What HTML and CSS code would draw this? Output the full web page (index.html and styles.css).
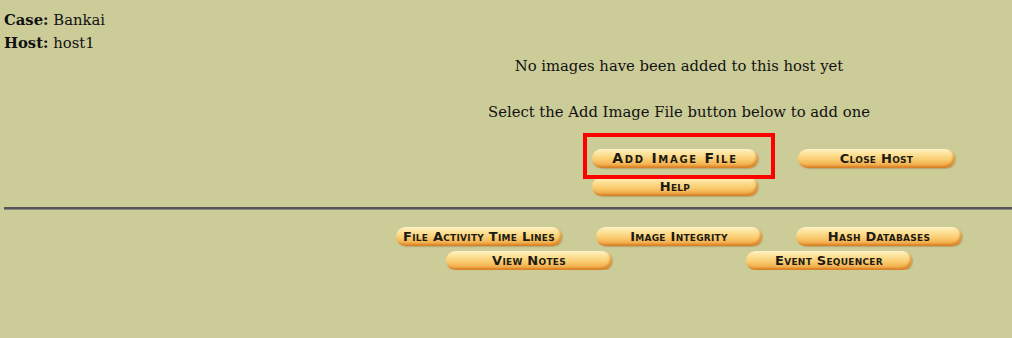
FILE: index.html
```html
<!DOCTYPE html>
<html>
<head>
<meta charset="utf-8">
<title>Host</title>
<link rel="stylesheet" href="styles.css">
</head>
<body>
<div class="page">
  <div class="info">
    <div><b>Case:</b> Bankai</div>
    <div><b>Host:</b> host1</div>
    <div class="center">No images have been added to this host yet</div>
    <div class="blank">&nbsp;</div>
    <div class="center">Select the Add Image File button below to add one</div>
  </div>

  <div class="actions">
    <div class="highlight"><a class="btn spaced">Add Image File</a></div>
    <a class="btn close">Close Host</a>
    <a class="btn">Help</a>
  </div>

  <hr class="rule">

  <div class="menu three">
    <a class="btn">File Activity Time Lines</a>
    <a class="btn">Image Integrity</a>
    <a class="btn">Hash Databases</a>
  </div>
  <div class="menu two">
    <a class="btn">View Notes</a>
    <a class="btn">Event Sequencer</a>
  </div>
</div>
</body>
</html>
```

FILE: styles.css
```css
html, body {
  margin: 0;
  padding: 0;
  background: #cccc99;
  overflow: hidden;
}

body {
  font-family: "DejaVu Serif", serif;
  font-size: 14.8px;
  color: #111;
}

.page {
  width: 1350px;
  margin-left: 4px;
  padding-top: 8px;
}

.info {
  line-height: 23px;
}

.center {
  text-align: center;
}

.actions {
  margin-top: 26px;
  margin-left: 588px;
  display: grid;
  grid-template-columns: 166px 157px;
  grid-auto-rows: 19px;
  column-gap: 40px;
  row-gap: 9px;
}

.highlight {
  position: relative;
}

.highlight::after {
  content: "";
  position: absolute;
  left: -9px;
  right: -17px;
  top: -16px;
  bottom: -11px;
  border: 4px solid #ff0000;
}

.rule {
  margin: 11px 0 0 0;
  height: 0;
  border: 0;
  border-top: 2px solid #555557;
  border-bottom: 1px solid #858588;
}

.menu {
  width: 600px;
  margin: 0 auto;
  display: grid;
  justify-items: center;
}

.menu.three {
  margin-top: 17px;
  grid-template-columns: repeat(3, 200px);
}

.menu.two {
  margin-top: 5px;
  grid-template-columns: repeat(2, 300px);
}

.btn {
  display: flex;
  align-items: center;
  justify-content: center;
  box-sizing: border-box;
  width: 166px;
  height: 19px;
  border-radius: 10px;
  background: linear-gradient(to bottom, #fff3c4 0%, #fde29a 25%, #f9cd70 55%, #f2ad4c 85%, #e8963a 100%);
  box-shadow: inset -2px -2px 2px rgba(200, 110, 20, 0.55), 1px 1px 1px rgba(140, 100, 40, 0.35);
  font-family: "DejaVu Sans", sans-serif;
  font-weight: bold;
  font-variant: small-caps;
  font-size: 13px;
  letter-spacing: 0.25px;
  color: #1c1a14;
  line-height: 1;
  padding-bottom: 1px;
}

.btn.spaced {
  font-size: 14px;
  letter-spacing: 1.7px;
}

.btn.close {
  width: 157px;
}
```
